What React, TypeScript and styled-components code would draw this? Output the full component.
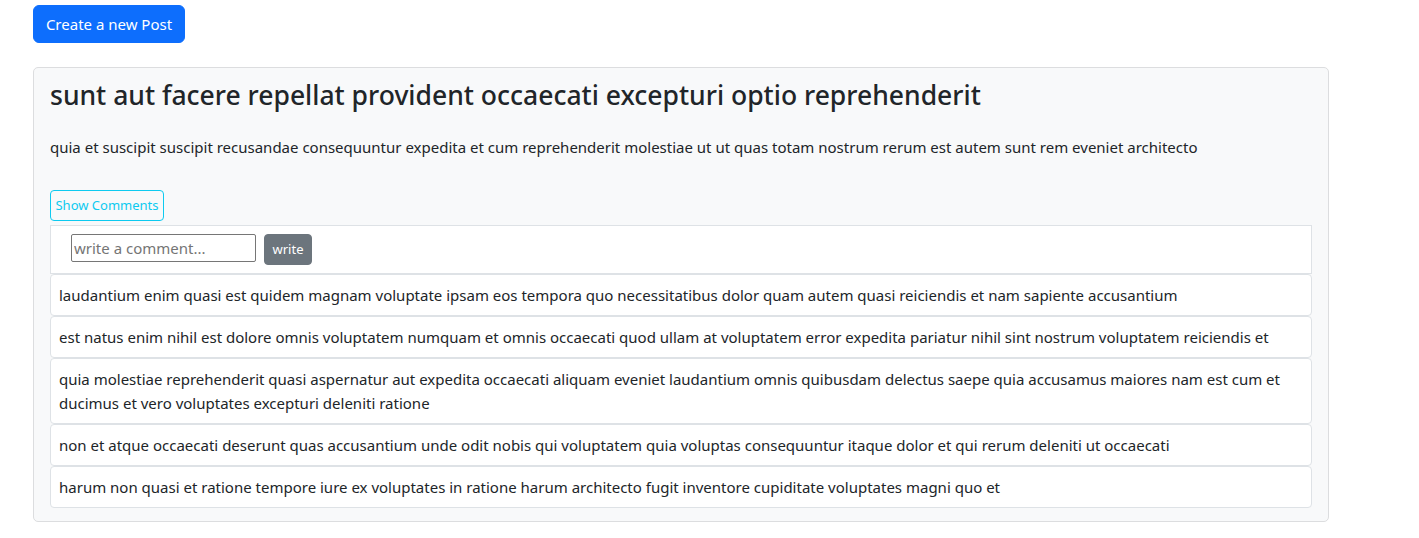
import React from "react";
import styled, { createGlobalStyle } from "styled-components";

const Global = createGlobalStyle`
  html, body { margin: 0; padding: 0; background: #fff; }
  body {
    font-family: "Noto Sans", "Open Sans", "DejaVu Sans", sans-serif;
    font-size: 15px;
    line-height: 1.5;
    color: #212529;
  }
  * { box-sizing: border-box; }
`;

const Page = styled.div`
  width: 1296px;
  margin-left: 33px;
  padding-top: 5px;
`;

const PrimaryButton = styled.button`
  display: block;
  width: 152px;
  height: 38px;
  padding: 0;
  white-space: nowrap;
  font-family: inherit;
  font-size: 15px;
  line-height: 24px;
  color: #fff;
  background: #0d6efd;
  border: 1px solid #0d6efd;
  border-radius: 6px;
  cursor: pointer;
`;

const PostList = styled.div`
  display: flex;
  flex-direction: column;
  gap: 16px;
  margin-top: 24px;
`;

const Card = styled.div`
  background: #f8f9fa;
  border: 1px solid #dcdddf;
  border-radius: 5px;
  padding: 12px 16px 13px;
`;

const Title = styled.h3`
  margin: 0 0 23px;
  font-size: 26.5px;
  font-weight: 500;
  line-height: 1.2;
`;

const Body = styled.p`
  margin: 0 0 31px;
  font-size: 15px;
  line-height: 24px;
`;

const OutlineButton = styled.button`
  display: block;
  width: 114px;
  height: 31px;
  padding: 4px 0;
  white-space: nowrap;
  font-family: inherit;
  font-size: 13px;
  line-height: 21px;
  color: #0dcaf0;
  background: transparent;
  border: 1px solid #0dcaf0;
  border-radius: 4px;
  cursor: pointer;
`;

const Comments = styled.ul`
  list-style: none;
  margin: 4px 0 0;
  padding: 0;
  display: flex;
  flex-direction: column;
`;

const FormItem = styled.li`
  display: flex;
  align-items: flex-start;
  gap: 8px;
  background: #fff;
  border: 1px solid #dee2e6;
  padding: 8px 20px;
`;

const CommentInput = styled.input`
  width: 185px;
  height: 28px;
  padding: 1px 2px;
  font-family: inherit;
  font-size: 15px;
  color: #212529;
  background: #fff;
  border: 1px solid #767676;
  border-radius: 2px;
  outline: none;
  &::placeholder { color: #757575; }
`;

const SecondaryButton = styled.button`
  width: 48px;
  height: 31px;
  padding: 4px 0;
  font-family: inherit;
  font-size: 13px;
  line-height: 21px;
  color: #fff;
  background: #6c757d;
  border: 1px solid #6c757d;
  border-radius: 4px;
  cursor: pointer;
`;

const CommentItem = styled.li`
  background: #fff;
  border: 1px solid #dee2e6;
  border-radius: 4px;
  padding: 8px 8px;
  font-size: 15px;
  line-height: 24px;
`;

const posts = [
  {
    title: "sunt aut facere repellat provident occaecati excepturi optio reprehenderit",
    body:
      "quia et suscipit suscipit recusandae consequuntur expedita et cum reprehenderit molestiae ut ut quas totam nostrum rerum est autem sunt rem eveniet architecto",
    comments: [
      "laudantium enim quasi est quidem magnam voluptate ipsam eos tempora quo necessitatibus dolor quam autem quasi reiciendis et nam sapiente accusantium",
      "est natus enim nihil est dolore omnis voluptatem numquam et omnis occaecati quod ullam at voluptatem error expedita pariatur nihil sint nostrum voluptatem reiciendis et",
      "quia molestiae reprehenderit quasi aspernatur aut expedita occaecati aliquam eveniet laudantium omnis quibusdam delectus saepe quia accusamus maiores nam est cum et ducimus et vero voluptates excepturi deleniti ratione",
      "non et atque occaecati deserunt quas accusantium unde odit nobis qui voluptatem quia voluptas consequuntur itaque dolor et qui rerum deleniti ut occaecati",
      "harum non quasi et ratione tempore iure ex voluptates in ratione harum architecto fugit inventore cupiditate voluptates magni quo et",
    ],
  },
  {
    title: "qui est esse",
    body:
      "est rerum tempore vitae sequi sint nihil reprehenderit dolor beatae ea dolores neque fugiat blanditiis voluptate porro vel nihil molestiae ut reiciendis qui aperiam non debitis possimus qui neque nisi nulla",
    comments: [] as string[],
  },
];

export default function App() {
  return (
    <>
      <Global />
      <Page>
        <PrimaryButton>Create a new Post</PrimaryButton>
        <PostList>
          {posts.map((p, i) => (
            <Card key={i}>
              <Title>{p.title}</Title>
              <Body>{p.body}</Body>
              <OutlineButton>Show Comments</OutlineButton>
              {p.comments.length > 0 && (
                <Comments>
                  <FormItem>
                    <CommentInput placeholder="write a comment..." />
                    <SecondaryButton>write</SecondaryButton>
                  </FormItem>
                  {p.comments.map((c, j) => (
                    <CommentItem key={j}>{c}</CommentItem>
                  ))}
                </Comments>
              )}
            </Card>
          ))}
        </PostList>
      </Page>
    </>
  );
}
